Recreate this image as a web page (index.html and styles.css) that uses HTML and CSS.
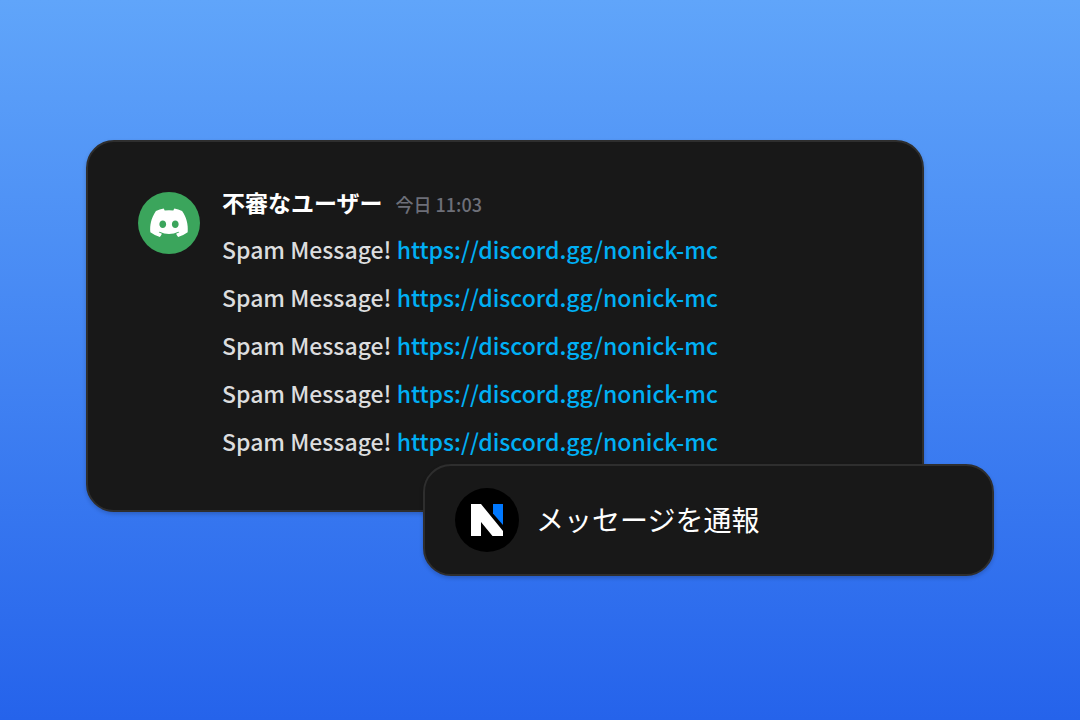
FILE: index.html
```html
<!DOCTYPE html>
<html lang="ja">
<head>
<meta charset="utf-8">
<meta name="viewport" content="width=device-width, initial-scale=1">
<title>メッセージを通報</title>
<link rel="stylesheet" href="styles.css">
</head>
<body>
<main class="scene">
  <div class="stack">
    <article class="card message">
      <svg class="avatar" viewBox="0 0 62 62" aria-hidden="true">
        <circle cx="31" cy="31" r="31" fill="#3ba55c"/>
        <g transform="translate(12.2 16.6) scale(.296)">
          <path fill="#fff" d="M107.7 8.07A105.15 105.15 0 0 0 81.47 0a72.06 72.06 0 0 0-3.36 6.83 97.68 97.68 0 0 0-29.11 0A72.37 72.37 0 0 0 45.64 0a105.89 105.89 0 0 0-26.25 8.09C2.79 32.65-1.71 56.6.54 80.21a105.73 105.73 0 0 0 32.17 16.15 77.7 77.7 0 0 0 6.89-11.11 68.42 68.42 0 0 1-10.85-5.18c.91-.66 1.8-1.34 2.66-2a75.57 75.57 0 0 0 64.32 0c.87.71 1.76 1.39 2.66 2a68.68 68.68 0 0 1-10.87 5.19 77 77 0 0 0 6.89 11.1 105.25 105.25 0 0 0 32.19-16.14c2.64-27.38-4.51-51.11-18.9-72.15ZM42.45 65.69C36.18 65.69 31 60 31 53s5-12.74 11.43-12.74S54 46 53.89 53s-5.05 12.69-11.44 12.69Zm42.24 0C78.41 65.69 73.25 60 73.25 53s5-12.74 11.44-12.74S96.23 46 96.12 53s-5.04 12.69-11.43 12.69Z"/>
        </g>
      </svg>
      <div class="content">
        <header class="meta">
          <h1 class="name">不審なユーザー</h1>
          <time class="time" datetime="11:03">今日 11:03</time>
        </header>
        <p class="line">Spam Message! <a class="link" href="https://discord.gg/nonick-mc">https://discord.gg/nonick-mc</a></p>
        <p class="line">Spam Message! <a class="link" href="https://discord.gg/nonick-mc">https://discord.gg/nonick-mc</a></p>
        <p class="line">Spam Message! <a class="link" href="https://discord.gg/nonick-mc">https://discord.gg/nonick-mc</a></p>
        <p class="line">Spam Message! <a class="link" href="https://discord.gg/nonick-mc">https://discord.gg/nonick-mc</a></p>
        <p class="line">Spam Message! <a class="link" href="https://discord.gg/nonick-mc">https://discord.gg/nonick-mc</a></p>
      </div>
    </article>
    <button class="card action" type="button">
      <svg class="logo" viewBox="0 0 64 64" aria-hidden="true">
        <circle cx="32" cy="32" r="32" fill="#000"/>
        <path fill="#fff" d="M16 16h10l22 27v5H37.500L26 34v14H16z"/>
        <path fill="#0078ff" d="M38 16h10v21L38 25.500z"/>
      </svg>
      <span class="label">メッセージを通報</span>
    </button>
  </div>
</main>
</body>
</html>
```
FILE: styles.css
```css
* {
  box-sizing: border-box;
}

body {
  margin: 0;
  font-family: "Noto Sans CJK JP", "Noto Sans", sans-serif;
}

.scene {
  min-height: 100vh;
  padding: 140px 86px;
  background: linear-gradient(#60a5fa, #2563eb);
}

.stack {
  position: relative;
  padding-right: 70px;
}

.card {
  display: flex;
  background: #181818;
  border: 2px solid #2e2e2e;
  border-radius: 28px;
  box-shadow: 0 2px 4px rgba(0, 0, 0, 0.2);
}

.message {
  gap: 22px;
  padding: 44px 50px 45px;
}

.avatar {
  flex: none;
  width: 62px;
  height: 62px;
  margin-top: 6px;
}

.content {
  flex: 1;
}

.meta {
  display: flex;
  align-items: baseline;
  gap: 13px;
  height: 39px;
  line-height: 32px;
}

.name {
  margin: 0;
  font-size: 23px;
  font-weight: 700;
  color: #fff;
}

.time {
  font-size: 18px;
  font-weight: 500;
  color: #6d6f78;
}

.line {
  margin: 0;
  font-size: 23px;
  font-weight: 500;
  line-height: 48px;
  color: #dcddde;
}

.link {
  color: #00aff4;
  text-decoration: none;
}

.action {
  position: absolute;
  right: 0;
  bottom: -64px;
  width: 571px;
  align-items: center;
  gap: 17px;
  padding: 22px 30px;
  font-family: inherit;
  font-size: 28px;
  line-height: 40px;
  color: #fff;
  text-align: left;
}

.label {
  padding-bottom: 2px;
}

.logo {
  flex: none;
  width: 64px;
  height: 64px;
}
```
